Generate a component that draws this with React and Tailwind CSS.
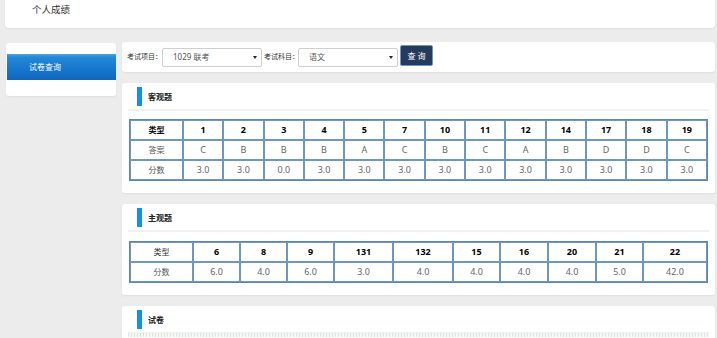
import React from "react";

const objHead = ["1","2","3","4","5","7","10","11","12","14","17","18","19"];
const objAns = ["C","B","B","B","A","C","B","C","A","B","D","D","C"];
const objScore = ["3.0","3.0","0.0","3.0","3.0","3.0","3.0","3.0","3.0","3.0","3.0","3.0","3.0"];

const subHead = ["6","8","9","131","132","15","16","20","21","22"];
const subScore = ["6.0","4.0","6.0","3.0","4.0","4.0","4.0","4.0","5.0","42.0"];
const subWidths = [47,47,47,59,60,47,48,48,47];

const cell = "border border-[#6e96c4] h-[20px] p-0 text-center align-middle";

function Title({ text }) {
  return (
    <div>
      <div className="flex items-center h-[19px] pl-[15px] mt-[4px]">
        <div className="w-[5px] h-[19px] bg-[#1591e3]" />
        <span className="ml-[6px] text-[8px] font-bold text-[#222]">{text}</span>
      </div>
      <div className="mx-[6px] mt-[3px] h-[2px] bg-[#f1f1f1]" />
    </div>
  );
}

function Select({ value }) {
  return (
    <div className="w-[100px] shrink-0 h-[19px] border border-[#cfcfcf] rounded-[2px] bg-white flex items-center justify-between pl-[10px] pr-[4px]">
      <span className="text-[8px] text-[#555] whitespace-nowrap">{value}</span>
      <span className="w-0 h-0 border-l-[2px] border-r-[2px] border-t-[3px] border-l-transparent border-r-transparent border-t-[#222]" />
    </div>
  );
}

export default function App() {
  return (
    <div
      className="w-[717px] h-[338px] overflow-hidden bg-[#ececec]"
      style={{ fontFamily: '"Noto Sans", "Noto Sans CJK SC", sans-serif' }}
    >
      <div className="ml-[5px] mr-[2px] h-[28px] bg-white rounded-b-[4px] shadow-[0_1px_2px_rgba(0,0,0,0.06)] pl-[27px] pt-[3px] text-[9.5px] leading-[14px] text-[#333]">
        个人成绩
      </div>

      <div className="flex pl-[6px] pr-[2px] mt-[14px] gap-[6px]">
        <div className="w-[110px] shrink-0 self-start h-[53px] mt-[1px] bg-white rounded-[3px] shadow-[0_1px_2px_rgba(0,0,0,0.06)] pt-[11px] pl-[1px]">
          <div className="h-[26px] flex items-center pl-[22px] bg-[linear-gradient(180deg,#4ea6e6_0px,#2588d8_3px,#1676cb_60%,#0e67bd_100%)]">
            <span className="text-[8px] text-white">试卷查询</span>
          </div>
        </div>

        <div className="flex-1 flex flex-col gap-[11px]">
          <div className="h-[30px] bg-white rounded-[3px] shadow-[0_1px_2px_rgba(0,0,0,0.06)] flex items-center pl-[5px]">
            <span className="text-[7px] text-[#333] w-[35px] shrink-0 whitespace-nowrap">考试项目：</span>
            <Select value="1029 联考" />
            <span className="text-[7px] text-[#333] ml-[2px] w-[34px] shrink-0 whitespace-nowrap">考试科目：</span>
            <Select value="语文" />
            <div className="ml-[2px] w-[33px] shrink-0 h-[21px] mb-[3px] bg-[#253a5d] border border-[#6d93cc] rounded-[2px] flex items-center justify-center">
              <span className="text-[8px] text-white tracking-[2px] pl-[2px]">查询</span>
            </div>
          </div>

          <div className="bg-white rounded-[3px] shadow-[0_1px_2px_rgba(0,0,0,0.06)] pb-[12px]">
            <Title text="客观题" />
            <div className="px-[7px] mt-[8px]">
              <table className="w-full table-fixed border-separate border-spacing-0 border border-[#5a86b8] text-[9px]">
                <colgroup>
                  <col style={{ width: 53 }} />
                </colgroup>
                <tbody>
                  <tr>
                    <td className={cell + " font-bold text-[8px] text-[#111]"}>类型</td>
                    {objHead.map((h, i) => (
                      <td key={i} className={cell + " font-bold text-black"}>{h}</td>
                    ))}
                  </tr>
                  <tr>
                    <td className={cell + " text-[8px] text-[#555]"}>答案</td>
                    {objAns.map((h, i) => (
                      <td key={i} className={cell + " text-[#666]"}>{h}</td>
                    ))}
                  </tr>
                  <tr>
                    <td className={cell + " text-[8px] text-[#555]"}>分数</td>
                    {objScore.map((h, i) => (
                      <td key={i} className={cell + " text-[#666]"}>{h}</td>
                    ))}
                  </tr>
                </tbody>
              </table>
            </div>
          </div>

          <div className="bg-white rounded-[3px] shadow-[0_1px_2px_rgba(0,0,0,0.06)] pb-[12px]">
            <Title text="主观题" />
            <div className="px-[7px] mt-[9px]">
              <table className="w-full table-fixed border-separate border-spacing-0 border border-[#5a86b8] text-[9px]">
                <colgroup>
                  <col style={{ width: 63 }} />
                  {subWidths.map((w, i) => (
                    <col key={i} style={{ width: w }} />
                  ))}
                  <col />
                </colgroup>
                <tbody>
                  <tr>
                    <td className={cell + " text-[8px] text-[#333]"}>类型</td>
                    {subHead.map((h, i) => (
                      <td key={i} className={cell + " font-bold text-black"}>{h}</td>
                    ))}
                  </tr>
                  <tr>
                    <td className={cell + " text-[8px] text-[#555]"}>分数</td>
                    {subScore.map((h, i) => (
                      <td key={i} className={cell + " text-[#666]"}>{h}</td>
                    ))}
                  </tr>
                </tbody>
              </table>
            </div>
          </div>

          <div className="bg-white rounded-[3px] shadow-[0_1px_2px_rgba(0,0,0,0.06)] h-[60px]">
            <Title text="试卷" />
            <div className="mx-[6px] -mt-[1px] h-[4px] bg-[repeating-linear-gradient(90deg,#dde4dd_0px,#dde4dd_1px,#f6f8f6_1px,#f6f8f6_3px)]" />
          </div>
        </div>
      </div>
    </div>
  );
}
